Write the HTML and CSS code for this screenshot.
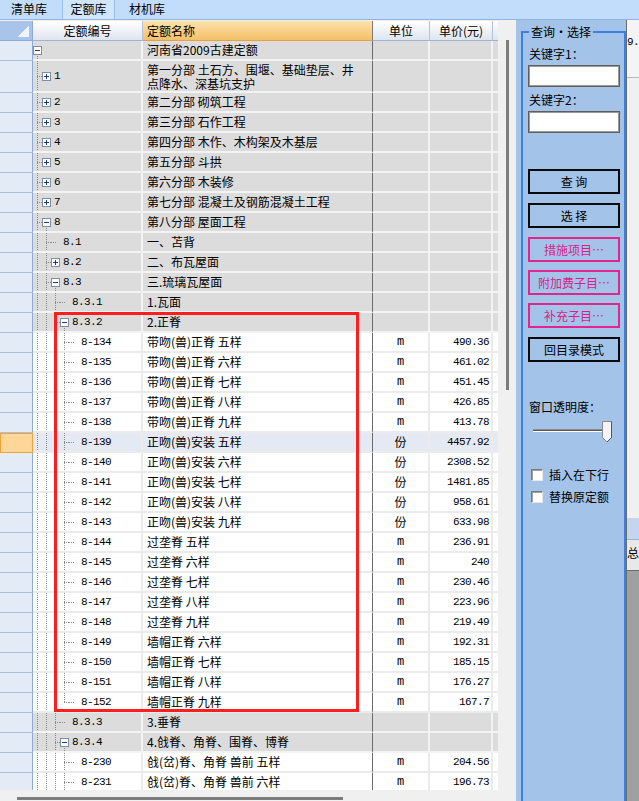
FILE: index.html
```html
<!DOCTYPE html>
<html lang="zh-CN">
<head>
<meta charset="utf-8">
<title>定额库</title>
<link rel="stylesheet" href="styles.css">
</head>
<body>
<div class="main">
  <div class="tabbar">
    <div class="tab t1">清单库</div>
    <div class="tab t2 on">定额库</div>
    <div class="tab t3">材机库</div>
  </div>
  <div class="work">
    <div class="gridpane">
      <div class="gridwrap">
        <div class="grid">
          <div class="hdr">
            <div class="hgut"></div>
            <div class="hc">定额编号</div>
            <div class="hc hname">定额名称</div>
            <div class="hc">单位</div>
            <div class="hc">单价(元)</div>
            <div class="hc hext"></div>
          </div>
          <div class="body">
            <div class="row g"><div class="gut"></div><div class="code"><i class="x m d"><b></b></i></div><div class="name">河南省2009古建定额</div><div class="unit"></div><div class="price"></div><div class="ext"></div></div>
            <div class="row g tall"><div class="gut"></div><div class="code"><i class="t"></i><i class="x p c"><b></b></i><span class="id">1</span></div><div class="name">第一分部 土石方、围堰、基础垫层、井<br>点降水、深基坑支护</div><div class="unit"></div><div class="price"></div><div class="ext"></div></div>
            <div class="row g"><div class="gut"></div><div class="code"><i class="t"></i><i class="x p c"><b></b></i><span class="id">2</span></div><div class="name">第二分部 砌筑工程</div><div class="unit"></div><div class="price"></div><div class="ext"></div></div>
            <div class="row g"><div class="gut"></div><div class="code"><i class="t"></i><i class="x p c"><b></b></i><span class="id">3</span></div><div class="name">第三分部 石作工程</div><div class="unit"></div><div class="price"></div><div class="ext"></div></div>
            <div class="row g"><div class="gut"></div><div class="code"><i class="t"></i><i class="x p c"><b></b></i><span class="id">4</span></div><div class="name">第四分部 木作、木构架及木基层</div><div class="unit"></div><div class="price"></div><div class="ext"></div></div>
            <div class="row g"><div class="gut"></div><div class="code"><i class="t"></i><i class="x p c"><b></b></i><span class="id">5</span></div><div class="name">第五分部 斗拱</div><div class="unit"></div><div class="price"></div><div class="ext"></div></div>
            <div class="row g"><div class="gut"></div><div class="code"><i class="t"></i><i class="x p c"><b></b></i><span class="id">6</span></div><div class="name">第六分部 木装修</div><div class="unit"></div><div class="price"></div><div class="ext"></div></div>
            <div class="row g"><div class="gut"></div><div class="code"><i class="t"></i><i class="x p c"><b></b></i><span class="id">7</span></div><div class="name">第七分部 混凝土及钢筋混凝土工程</div><div class="unit"></div><div class="price"></div><div class="ext"></div></div>
            <div class="row g"><div class="gut"></div><div class="code"><i class="t"></i><i class="x m c d"><b></b></i><span class="id">8</span></div><div class="name">第八分部 屋面工程</div><div class="unit"></div><div class="price"></div><div class="ext"></div></div>
            <div class="row g"><div class="gut"></div><div class="code"><i class="v"></i><i class="t"></i><i class="h"></i><span class="id">8.1</span></div><div class="name">一、苫背</div><div class="unit"></div><div class="price"></div><div class="ext"></div></div>
            <div class="row g"><div class="gut"></div><div class="code"><i class="v"></i><i class="t"></i><i class="x p c"><b></b></i><span class="id">8.2</span></div><div class="name">二、布瓦屋面</div><div class="unit"></div><div class="price"></div><div class="ext"></div></div>
            <div class="row g"><div class="gut"></div><div class="code"><i class="v"></i><i class="t"></i><i class="x m c d"><b></b></i><span class="id">8.3</span></div><div class="name">三.琉璃瓦屋面</div><div class="unit"></div><div class="price"></div><div class="ext"></div></div>
            <div class="row g"><div class="gut"></div><div class="code"><i class="v"></i><i class="v"></i><i class="t"></i><i class="h"></i><span class="id">8.3.1</span></div><div class="name">1.瓦面</div><div class="unit"></div><div class="price"></div><div class="ext"></div></div>
            <div class="row g"><div class="gut"></div><div class="code"><i class="v"></i><i class="v"></i><i class="t"></i><i class="x m c d"><b></b></i><span class="id">8.3.2</span></div><div class="name">2.正脊</div><div class="unit"></div><div class="price"></div><div class="ext"></div></div>
            <div class="row w"><div class="gut"></div><div class="code"><i class="v"></i><i class="v"></i><i class="v"></i><i class="t"></i><i class="h"></i><span class="id">8-134</span></div><div class="name">带吻(兽)正脊 五样</div><div class="unit">m</div><div class="price">490.36</div><div class="ext"></div></div>
            <div class="row w"><div class="gut"></div><div class="code"><i class="v"></i><i class="v"></i><i class="v"></i><i class="t"></i><i class="h"></i><span class="id">8-135</span></div><div class="name">带吻(兽)正脊 六样</div><div class="unit">m</div><div class="price">461.02</div><div class="ext"></div></div>
            <div class="row w"><div class="gut"></div><div class="code"><i class="v"></i><i class="v"></i><i class="v"></i><i class="t"></i><i class="h"></i><span class="id">8-136</span></div><div class="name">带吻(兽)正脊 七样</div><div class="unit">m</div><div class="price">451.45</div><div class="ext"></div></div>
            <div class="row w"><div class="gut"></div><div class="code"><i class="v"></i><i class="v"></i><i class="v"></i><i class="t"></i><i class="h"></i><span class="id">8-137</span></div><div class="name">带吻(兽)正脊 八样</div><div class="unit">m</div><div class="price">426.85</div><div class="ext"></div></div>
            <div class="row w"><div class="gut"></div><div class="code"><i class="v"></i><i class="v"></i><i class="v"></i><i class="t"></i><i class="h"></i><span class="id">8-138</span></div><div class="name">带吻(兽)正脊 九样</div><div class="unit">m</div><div class="price">413.78</div><div class="ext"></div></div>
            <div class="row w sel"><div class="gut"></div><div class="code"><i class="v"></i><i class="v"></i><i class="v"></i><i class="t"></i><i class="h"></i><span class="id">8-139</span></div><div class="name">正吻(兽)安装 五样</div><div class="unit cj">份</div><div class="price">4457.92</div><div class="ext"></div></div>
            <div class="row w"><div class="gut"></div><div class="code"><i class="v"></i><i class="v"></i><i class="v"></i><i class="t"></i><i class="h"></i><span class="id">8-140</span></div><div class="name">正吻(兽)安装 六样</div><div class="unit cj">份</div><div class="price">2308.52</div><div class="ext"></div></div>
            <div class="row w"><div class="gut"></div><div class="code"><i class="v"></i><i class="v"></i><i class="v"></i><i class="t"></i><i class="h"></i><span class="id">8-141</span></div><div class="name">正吻(兽)安装 七样</div><div class="unit cj">份</div><div class="price">1481.85</div><div class="ext"></div></div>
            <div class="row w"><div class="gut"></div><div class="code"><i class="v"></i><i class="v"></i><i class="v"></i><i class="t"></i><i class="h"></i><span class="id">8-142</span></div><div class="name">正吻(兽)安装 八样</div><div class="unit cj">份</div><div class="price">958.61</div><div class="ext"></div></div>
            <div class="row w"><div class="gut"></div><div class="code"><i class="v"></i><i class="v"></i><i class="v"></i><i class="t"></i><i class="h"></i><span class="id">8-143</span></div><div class="name">正吻(兽)安装 九样</div><div class="unit cj">份</div><div class="price">633.98</div><div class="ext"></div></div>
            <div class="row w"><div class="gut"></div><div class="code"><i class="v"></i><i class="v"></i><i class="v"></i><i class="t"></i><i class="h"></i><span class="id">8-144</span></div><div class="name">过垄脊 五样</div><div class="unit">m</div><div class="price">236.91</div><div class="ext"></div></div>
            <div class="row w"><div class="gut"></div><div class="code"><i class="v"></i><i class="v"></i><i class="v"></i><i class="t"></i><i class="h"></i><span class="id">8-145</span></div><div class="name">过垄脊 六样</div><div class="unit">m</div><div class="price">240</div><div class="ext"></div></div>
            <div class="row w"><div class="gut"></div><div class="code"><i class="v"></i><i class="v"></i><i class="v"></i><i class="t"></i><i class="h"></i><span class="id">8-146</span></div><div class="name">过垄脊 七样</div><div class="unit">m</div><div class="price">230.46</div><div class="ext"></div></div>
            <div class="row w"><div class="gut"></div><div class="code"><i class="v"></i><i class="v"></i><i class="v"></i><i class="t"></i><i class="h"></i><span class="id">8-147</span></div><div class="name">过垄脊 八样</div><div class="unit">m</div><div class="price">223.96</div><div class="ext"></div></div>
            <div class="row w"><div class="gut"></div><div class="code"><i class="v"></i><i class="v"></i><i class="v"></i><i class="t"></i><i class="h"></i><span class="id">8-148</span></div><div class="name">过垄脊 九样</div><div class="unit">m</div><div class="price">219.49</div><div class="ext"></div></div>
            <div class="row w"><div class="gut"></div><div class="code"><i class="v"></i><i class="v"></i><i class="v"></i><i class="t"></i><i class="h"></i><span class="id">8-149</span></div><div class="name">墙帽正脊 六样</div><div class="unit">m</div><div class="price">192.31</div><div class="ext"></div></div>
            <div class="row w"><div class="gut"></div><div class="code"><i class="v"></i><i class="v"></i><i class="v"></i><i class="t"></i><i class="h"></i><span class="id">8-150</span></div><div class="name">墙帽正脊 七样</div><div class="unit">m</div><div class="price">185.15</div><div class="ext"></div></div>
            <div class="row w"><div class="gut"></div><div class="code"><i class="v"></i><i class="v"></i><i class="v"></i><i class="t"></i><i class="h"></i><span class="id">8-151</span></div><div class="name">墙帽正脊 八样</div><div class="unit">m</div><div class="price">176.27</div><div class="ext"></div></div>
            <div class="row w"><div class="gut"></div><div class="code"><i class="v"></i><i class="v"></i><i class="v"></i><i class="l"></i><i class="h"></i><span class="id">8-152</span></div><div class="name">墙帽正脊 九样</div><div class="unit">m</div><div class="price">167.7</div><div class="ext"></div></div>
            <div class="row g"><div class="gut"></div><div class="code"><i class="v"></i><i class="v"></i><i class="t"></i><i class="h"></i><span class="id">8.3.3</span></div><div class="name">3.垂脊</div><div class="unit"></div><div class="price"></div><div class="ext"></div></div>
            <div class="row g"><div class="gut"></div><div class="code"><i class="v"></i><i class="v"></i><i class="t"></i><i class="x m c d"><b></b></i><span class="id">8.3.4</span></div><div class="name">4.戗脊、角脊、围脊、博脊</div><div class="unit"></div><div class="price"></div><div class="ext"></div></div>
            <div class="row w"><div class="gut"></div><div class="code"><i class="v"></i><i class="v"></i><i class="v"></i><i class="t"></i><i class="h"></i><span class="id">8-230</span></div><div class="name">戗(岔)脊、角脊 兽前 五样</div><div class="unit">m</div><div class="price">204.56</div><div class="ext"></div></div>
            <div class="row w"><div class="gut"></div><div class="code"><i class="v"></i><i class="v"></i><i class="v"></i><i class="t"></i><i class="h"></i><span class="id">8-231</span></div><div class="name">戗(岔)脊、角脊 兽前 六样</div><div class="unit">m</div><div class="price">196.73</div><div class="ext"></div></div>
          </div>
        </div>
        <div class="vscroll"><div class="vthumb"></div></div>
      </div>
      <div class="hscroll"><div class="hthumb"></div></div>
      <div class="mark"></div>
    </div>
    <aside class="panel">
      <fieldset class="query">
        <legend>查询・选择</legend>
        <div class="lbl k1">关键字1：</div>
        <div class="inp"></div>
        <div class="lbl k2">关键字2：</div>
        <div class="inp"></div>
        <div class="btn b1">查 询</div>
        <div class="btn">选 择</div>
        <div class="btn pk">措施项目…</div>
        <div class="btn pk b4">附加费子目…</div>
        <div class="btn pk b4">补充子目…</div>
        <div class="btn">回目录模式</div>
        <div class="lbl op">窗口透明度：</div>
        <svg class="slider" width="90" height="24" viewBox="0 0 90 24">
          <rect x="3" y="9" width="77" height="1" fill="#8c8c8c"/>
          <rect x="3" y="10" width="77" height="1" fill="#5a5a5a"/>
          <rect x="3" y="11" width="77" height="1" fill="#ffffff"/>
          <path d="M72.5 1.5 h9 v16 l-4.5 4.5 l-4.5 -4.5 z" fill="#f4f4f4" stroke="#8a8a8a"/>
          <path d="M81.5 1.5 v16 l-4.5 4.5" fill="none" stroke="#555"/>
        </svg>
        <div class="chk c1"><span class="cb"></span>插入在下行</div>
        <div class="chk"><span class="cb"></span>替换原定额</div>
      </fieldset>
    </aside>
  </div>
</div>
<div class="bgwin">
  <div class="bw-top"></div>
  <div class="bw-cell">9.7</div>
  <div class="bw-fill"></div>
  <div class="bw-band"></div>
  <div class="bw-cell2">总量</div>
  <div class="bw-gray"></div>
</div>
</body>
</html>
```

FILE: styles.css
```css
* { box-sizing: border-box; }
html, body { margin: 0; padding: 0; }
body {
  width: 639px;
  height: 801px;
  overflow: hidden;
  display: flex;
  background: #f0f0f0;
  font: 12px/14px "Noto Sans CJK SC", "Liberation Sans", sans-serif;
  color: #000;
  --dv: repeating-linear-gradient(to bottom, #8a8a8a 0 1px, transparent 1px 2px);
  --dh: repeating-linear-gradient(to right, #8a8a8a 0 1px, transparent 1px 2px);
}

.main { width: 627px; display: flex; flex-direction: column; }

/* tabs */
.tabbar {
  height: 20px;
  flex: none;
  display: flex;
  background: #c2dcfb;
  border-bottom: 1px solid #93b4df;
}
.tab { height: 19px; line-height: 17px; }
.t1 { width: 62px; padding-left: 11px; }
.t2 { width: 53px; text-align: center; }
.t3 { padding-left: 14px; }
.tab.on {
  background: #d1e5fc;
  border-left: 1px solid #9cbce6;
  border-right: 1px solid #9cbce6;
}

.work { flex: 1; display: flex; min-height: 0; }

/* grid pane */
.gridpane {
  position: relative;
  width: 516px;
  flex: none;
  display: flex;
  flex-direction: column;
  padding-top: 1px;
  background: #f0f0f0;
}
.gridwrap { display: flex; height: 769px; }
.grid { width: 498px; display: flex; flex-direction: column; }
.vscroll { width: 18px; padding-left: 8px; }
.vthumb { width: 3px; height: 350px; margin-top: 19px; background: #7c7c7c; }
.hscroll { height: 11px; padding-left: 17px; padding-top: 7px; }
.hthumb { width: 326px; height: 3px; background: #7c7c7c; }

.hdr {
  display: grid;
  grid-template-columns: 33px 110px 230px 57px 63px 5px;
  height: 20px;
  flex: none;
}
.hgut {
  background: #a8c4eb linear-gradient(135deg, transparent 50%, #eef4fc 50%) right 3px bottom 3px / 11px 11px no-repeat;
  border-right: 1px solid #8eaad4;
  border-bottom: 1px solid #8eaad4;
}
.hc {
  background: linear-gradient(#ffffff, #dfe5ee);
  border-right: 1px solid #b4c3d8;
  border-bottom: 1px solid #9db3d1;
  text-align: center;
  line-height: 19px;
  white-space: nowrap;
}
.hc.hname {
  background: linear-gradient(#fde3ac, #f5bf68);
  border-bottom-color: #e3a24a;
  border-right-color: #7a7a7a;
  text-align: left;
  padding-left: 4px;
}
.hc.hext { border-right: none; }

.body { height: 749px; overflow: hidden; flex: none; }
.row {
  display: grid;
  grid-template-columns: 33px 110px 230px 57px 63px 5px;
  height: 20px;
}
.row.tall { height: 32px; }
.g { --bg: #dcdcdc; --sep: #f3f3f3; }
.w { --bg: #ffffff; --sep: #ebebeb; }
.w.sel { --bg: #e5e9f3; }
.row > div { background-color: var(--bg); border-bottom: 2px solid var(--sep); min-width: 0; }
.row > .gut {
  background: #e3ebf7;
  border-bottom: 1px solid #a9c0e0;
  border-right: 1px solid #8eaad4;
}
.row.sel > .gut { background: #fed796; border: 1px solid #f0a23c; }

.code {
  display: flex;
  border-right: 2px solid var(--sep);
  font-family: "Liberation Mono", "Noto Sans CJK SC", monospace;
  font-size: 11px;
  letter-spacing: -0.6px;
}
.id { align-self: center; margin-left: 3px; }
.name {
  display: flex;
  align-items: center;
  padding-left: 4px;
  white-space: nowrap;
  border-right: 1px solid #6b6b6b;
}
.tall .name { line-height: 14px; padding-top: 1px; }
.unit {
  display: flex;
  align-items: center;
  justify-content: center;
  border-right: 2px solid var(--sep);
  font-family: "Liberation Mono", monospace;
}
.unit.cj { font-family: "Noto Sans CJK SC", sans-serif; }
.price {
  display: flex;
  align-items: center;
  justify-content: flex-end;
  padding-right: 2px;
  border-right: 2px solid var(--sep);
  font-family: "Liberation Mono", monospace;
  font-size: 11px;
  letter-spacing: -0.6px;
}

/* tree guides */
.code i {
  width: 9px;
  flex: none;
  display: flex;
  align-items: center;
  justify-content: center;
}
.code .v { background: var(--dv) 4px 0 / 1px 100% no-repeat; }
.code .t { background: var(--dv) 4px 0 / 1px 100% no-repeat, var(--dh) 4px 50% / 5px 1px no-repeat; }
.code .l { background: var(--dv) 4px 0 / 1px 50% no-repeat, var(--dh) 4px 50% / 5px 1px no-repeat; }
.code .h { background: var(--dh) 0 50% / 6px 1px no-repeat; }
.code .x.d { background: var(--dv) 4px 100% / 1px 50% no-repeat; }
.code .x b {
  width: 9px;
  height: 9px;
  border: 1px solid #7d8fa8;
  background: #fff;
}
.code .x.m b {
  background: linear-gradient(#1f3a78, #1f3a78) center / 5px 1px no-repeat, #fff;
}
.code .x.p b {
  background: linear-gradient(#1f3a78, #1f3a78) center / 5px 1px no-repeat,
              linear-gradient(#1f3a78, #1f3a78) center / 1px 5px no-repeat, #fff;
}

/* red highlight frame drawn over the list */
.mark {
  position: absolute;
  left: 54px;
  top: 292px;
  width: 305px;
  height: 400px;
  border: 3px solid #ff1e1e;
  pointer-events: none;
}

/* right query panel */
.panel {
  width: 111px;
  flex: none;
  background: #a3c3e9;
  border-right: 1px solid #6c6c6c;
  overflow: hidden;
  padding-left: 5px;
}
.query {
  margin: 4px 0 0 0;
  width: 105px;
  height: 900px;
  border: 2px solid #3d7ede;
  padding: 0 0 0 5px;
  min-inline-size: 0;
}
.query legend {
  padding: 0 2px;
  margin-left: 1px;
  line-height: 16px;
}
.lbl { padding-left: 1px; white-space: nowrap; }
.k1 { margin-top: 7px; }
.k2 { margin-top: 6px; }
.inp {
  width: 92px;
  height: 22px;
  margin-top: 4px;
  background: #fff;
  border: 1px solid #5e5e5e;
  box-shadow: inset 0 0 0 1px #9a9a9a;
}
.btn {
  width: 92px;
  height: 25px;
  margin-top: 9px;
  border: 2px solid #0a0a0a;
  display: flex;
  align-items: center;
  justify-content: center;
  white-space: nowrap;
}
.btn.b1 { margin-top: 36px; }
.btn.b4 { margin-top: 8px; }
.btn.pk { border-color: #e2248f; color: #d81e8a; }
.op { margin-top: 38px; }
.slider { display: block; margin-top: 6px; margin-left: 2px; }
.chk {
  display: flex;
  align-items: center;
  gap: 6px;
  height: 16px;
  margin-left: 3px;
  margin-top: 6px;
}
.chk.c1 { margin-top: 23px; }
.cb {
  width: 12px;
  height: 12px;
  flex: none;
  background: #fff;
  border: 1px solid;
  border-color: #7a7a7a #e8e8e8 #e8e8e8 #7a7a7a;
  box-shadow: inset 1px 1px 0 #a0a0a0;
}

/* window behind, at the right edge */
.bgwin { width: 12px; flex: none; display: flex; flex-direction: column; }
.bw-top { height: 20px; background: #c2dcfb; border-bottom: 1px solid #93b4df; }
.bw-cell {
  height: 58px;
  padding-top: 15px;
  border-bottom: 1px solid #b8b8b8;
  font-family: "Liberation Mono", monospace;
  font-size: 11px;
  letter-spacing: -0.6px;
  white-space: nowrap;
  overflow: hidden;
  background: #f4f4f4;
}
.bw-fill { height: 440px; background: #f0f0f0; }
.bw-band { height: 22px; background: #c3d6ee; border-bottom: 1px solid #9ab4d8; }
.bw-cell2 {
  height: 31px;
  padding-top: 6px;
  white-space: nowrap;
  overflow: hidden;
  background: #e8e8e8;
  border-bottom: 1px solid #6c6c6c;
}
.bw-gray { flex: 1; background: #a0a0a0; }
```
